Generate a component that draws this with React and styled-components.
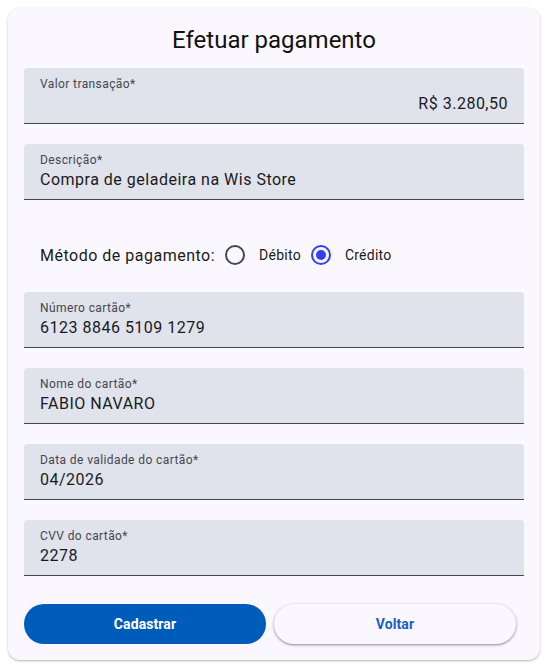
import React, { useState } from 'react';
import styled, { createGlobalStyle } from 'styled-components';

const GlobalStyle = createGlobalStyle`
  html, body {
    margin: 0;
    padding: 0;
    background: #ffffff;
  }
  body {
    font-family: Roboto, "Liberation Sans", sans-serif;
  }
  * {
    box-sizing: border-box;
  }
`;

const Page = styled.div`
  padding: 8px;
  width: 548px;
`;

const Card = styled.form`
  width: 532px;
  background: #faf8fe;
  border-radius: 12px;
  box-shadow: 0 1px 3px rgba(0, 0, 0, 0.22), 0 1px 1px rgba(0, 0, 0, 0.08);
  padding: 18px 16px 16px;
  display: flex;
  flex-direction: column;
`;

const Title = styled.h1`
  margin: 0 0 14px;
  font-size: 24px;
  line-height: 28px;
  font-weight: 400;
  text-align: center;
  color: #111111;
`;

const Fields = styled.div`
  display: flex;
  flex-direction: column;
  gap: 20px;
`;

const Field = styled.label`
  display: flex;
  flex-direction: column;
  width: 500px;
  height: 56px;
  padding: 8px 16px 7px;
  background: #e0e2ec;
  border-radius: 4px 4px 0 0;
  border-bottom: 1px solid #44474e;
`;

const FieldLabel = styled.span`
  font-size: 12px;
  line-height: 16px;
  color: #44474e;
  letter-spacing: 0.4px;
`;

const FieldValue = styled.span`
  font-size: 16px;
  line-height: 24px;
  color: #1a1b20;
  letter-spacing: 0.5px;
  text-align: ${({ align }) => align || 'left'};
`;

const RadioRow = styled.div`
  display: flex;
  align-items: center;
  height: 40px;
  padding-left: 16px;
  margin: 35px 0 17px;
`;

const RadioTitle = styled.span`
  font-size: 16px;
  color: #1a1b20;
  letter-spacing: 0.5px;
`;

const RadioOption = styled.label`
  display: flex;
  align-items: center;
  cursor: pointer;
`;

const RadioHit = styled.span`
  width: 40px;
  height: 40px;
  display: flex;
  align-items: center;
  justify-content: center;
`;

const RadioCircle = styled.span`
  width: 20px;
  height: 20px;
  border-radius: 50%;
  border: 2px solid ${({ checked }) => (checked ? '#343dff' : '#44474e')};
  display: flex;
  align-items: center;
  justify-content: center;

  &::after {
    content: '';
    width: 10px;
    height: 10px;
    border-radius: 50%;
    background: #343dff;
    display: ${({ checked }) => (checked ? 'block' : 'none')};
  }
`;

const RadioText = styled.span`
  font-size: 14px;
  color: #1a1b20;
  padding-left: 4px;
  letter-spacing: 0.25px;
`;

const Actions = styled.div`
  display: flex;
  gap: 8px;
  margin-top: 28px;
`;

const Button = styled.button`
  width: 242px;
  height: 40px;
  border: none;
  border-radius: 20px;
  font-family: Roboto, "Liberation Sans", sans-serif;
  font-size: 14px;
  font-weight: 700;
  letter-spacing: 0.1px;
  cursor: pointer;
  background: ${({ primary }) => (primary ? '#005cbb' : '#faf8fe')};
  color: ${({ primary }) => (primary ? '#ffffff' : '#1f5cc0')};
  box-shadow: ${({ primary }) =>
    primary ? 'none' : '0 1px 2px rgba(0,0,0,0.3), 0 1px 3px 1px rgba(0,0,0,0.12)'};
`;

const fieldsTop = [
  { label: 'Valor transação*', value: 'R$ 3.280,50', align: 'right' },
  { label: 'Descrição*', value: 'Compra de geladeira na Wis Store' },
];

const fieldsCard = [
  { label: 'Número cartão*', value: '6123 8846 5109 1279' },
  { label: 'Nome do cartão*', value: 'FABIO NAVARO' },
  { label: 'Data de validade do cartão*', value: '04/2026' },
  { label: 'CVV do cartão*', value: '2278' },
];

const App = () => {
  const [method, setMethod] = useState('credito');

  return (
    <>
      <GlobalStyle />
      <Page>
        <Card onSubmit={(e) => e.preventDefault()}>
          <Title>Efetuar pagamento</Title>
          <Fields>
            {fieldsTop.map((f) => (
              <Field key={f.label}>
                <FieldLabel>{f.label}</FieldLabel>
                <FieldValue align={f.align}>{f.value}</FieldValue>
              </Field>
            ))}
          </Fields>

          <RadioRow>
            <RadioTitle>Método de pagamento:</RadioTitle>
            <RadioOption onClick={() => setMethod('debito')}>
              <RadioHit>
                <RadioCircle checked={method === 'debito'} />
              </RadioHit>
              <RadioText>Débito</RadioText>
            </RadioOption>
            <RadioOption onClick={() => setMethod('credito')}>
              <RadioHit>
                <RadioCircle checked={method === 'credito'} />
              </RadioHit>
              <RadioText>Crédito</RadioText>
            </RadioOption>
          </RadioRow>

          <Fields>
            {fieldsCard.map((f) => (
              <Field key={f.label}>
                <FieldLabel>{f.label}</FieldLabel>
                <FieldValue>{f.value}</FieldValue>
              </Field>
            ))}
          </Fields>

          <Actions>
            <Button type="submit" primary>Cadastrar</Button>
            <Button type="button">Voltar</Button>
          </Actions>
        </Card>
      </Page>
    </>
  );
};

export default App;
